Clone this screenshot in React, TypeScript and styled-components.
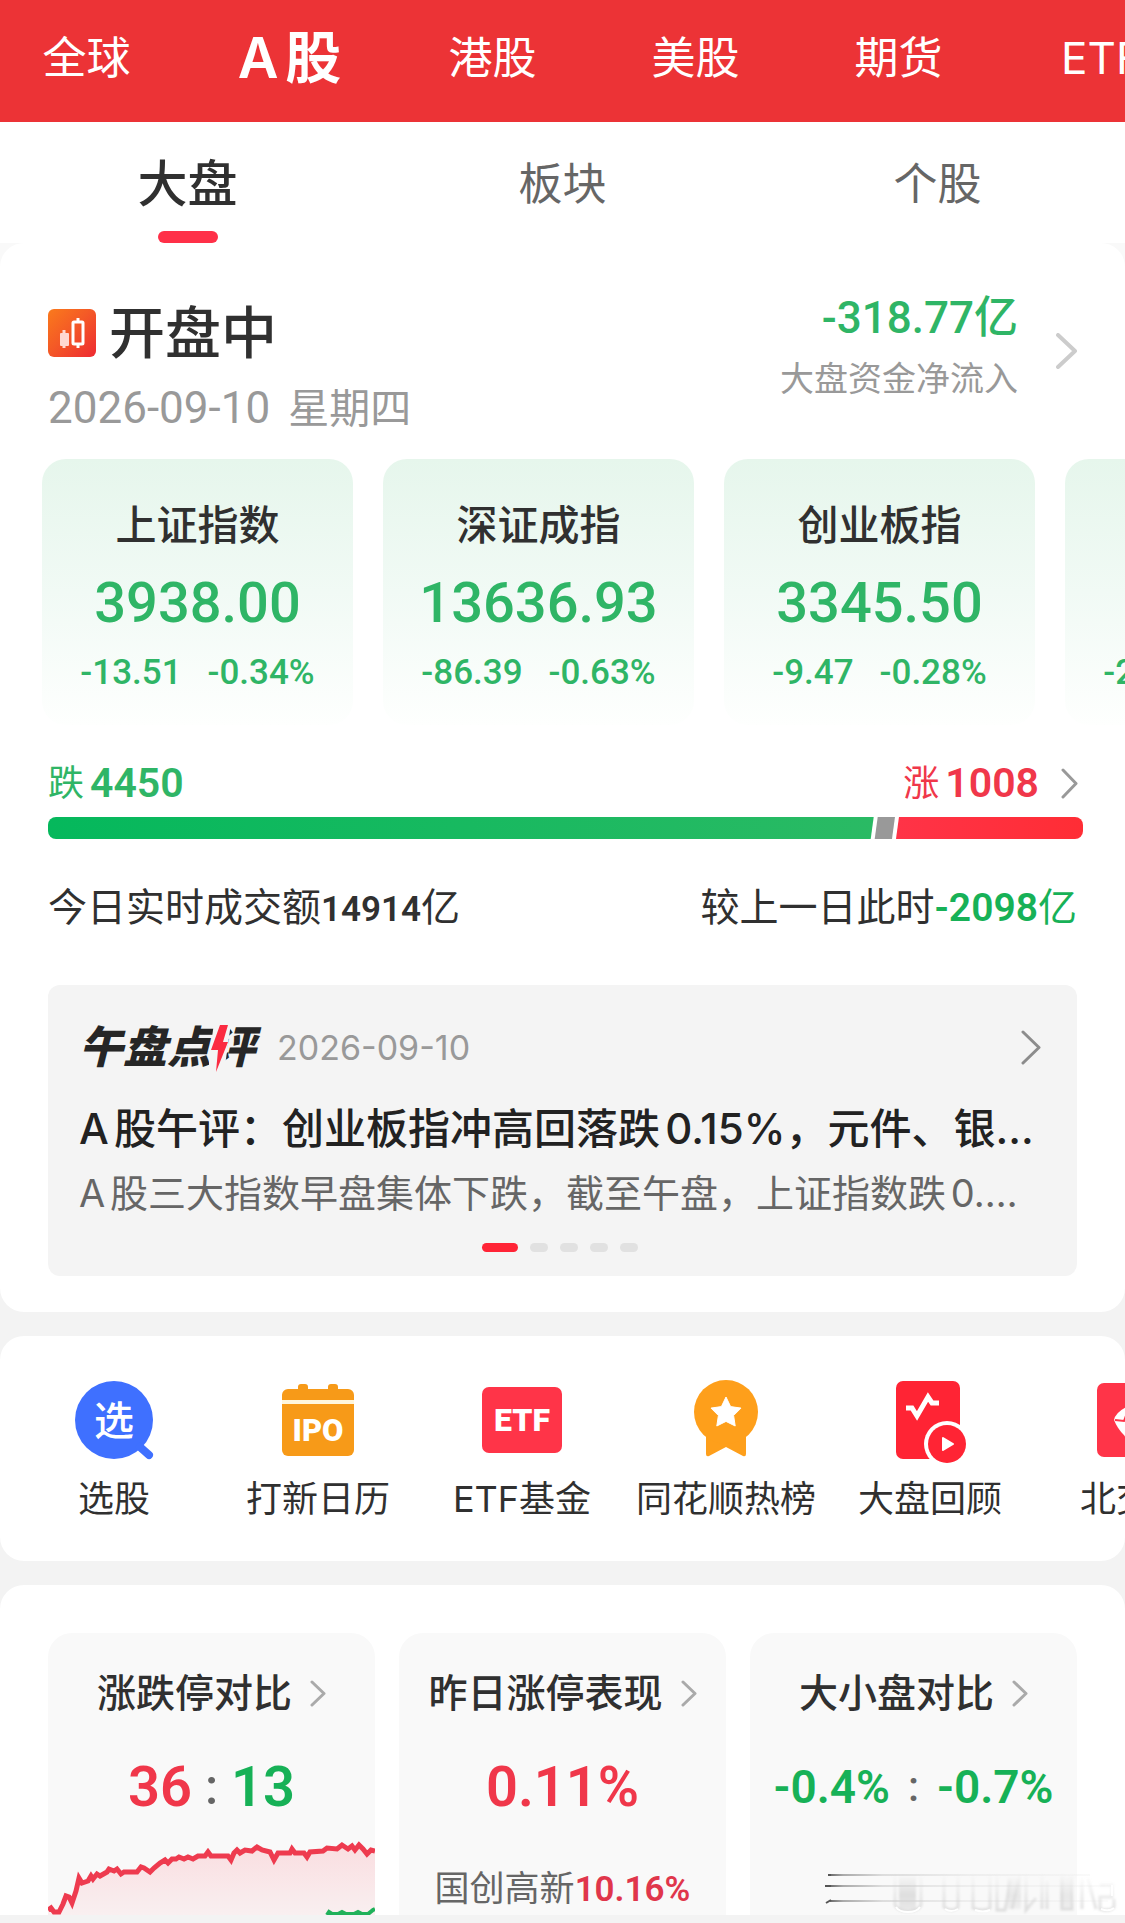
import React from "react";
import styled, { createGlobalStyle } from "styled-components";

const GlobalStyle = createGlobalStyle`
  *, *::before, *::after { box-sizing: border-box; }
  html { background: #f3f3f3; }
  body {
    margin: 0;
    overflow-x: hidden;
    color: #303030;
    font-family: Inter, "Noto Sans CJK SC", sans-serif;
  }
  button { border: 0; padding: 0; background: none; color: inherit; font: inherit; cursor: pointer; }
  a { color: inherit; text-decoration: none; }
  h1, h2, h3, p, ul { margin: 0; padding: 0; font-weight: inherit; }
  ul { list-style: none; }
  svg { display: block; flex: none; }
`;

const RED = "#f0374a";
const GREEN = "#2fb566";
const DEEP_GREEN = "#17b157";

const Page = styled.div`
  position: relative;
  width: 100%;
  min-height: 100vh;
  padding-bottom: 9px;
  overflow: hidden;
`;

const MarketNav = styled.nav`
  display: flex;
  align-items: center;
  height: 122px;
  padding-bottom: 7px;
  overflow: hidden;
  background: #ec3336;
`;

const MarketList = styled.ul`
  display: flex;
  margin-left: -15px;
`;

const MarketItem = styled.li`
  flex: none;
  width: 203px;
  text-align: center;
`;

const MarketLink = styled.a<{ $active?: boolean }>`
  color: #fff;
  font-size: ${(p) => (p.$active ? 56 : 44)}px;
  font-weight: ${(p) => (p.$active ? 600 : 400)};
  line-height: 64px;
  white-space: nowrap;
  text-autospace: normal;
`;

const SubTabs = styled.nav`
  display: grid;
  grid-template-columns: repeat(3, 1fr);
  background: #fff;
`;

const SubTab = styled.button<{ $active?: boolean }>`
  display: flex;
  flex-direction: column;
  align-items: center;
  height: 121px;
  padding-top: 30px;
  color: ${(p) => (p.$active ? "#303030" : "#666")};
  font-size: ${(p) => (p.$active ? 50 : 44)}px;
  font-weight: ${(p) => (p.$active ? 500 : 400)};
  line-height: 64px;
`;

const Indicator = styled.span`
  width: 60px;
  height: 12px;
  margin-top: 15px;
  border-radius: 6px;
  background: #ff3048;
`;

const Overview = styled.div`
  background: linear-gradient(#f9f9f9 50%, #f3f3f3 50%);
`;

const Panel = styled.section<{ $cut?: boolean }>`
  margin-bottom: ${(p) => (p.$cut ? 0 : 24)}px;
  border-radius: ${(p) => (p.$cut ? "24px 24px 0 0" : "24px")};
  background: #fff;
  overflow: hidden;
`;

const StatusRow = styled.header`
  display: flex;
  justify-content: space-between;
  padding: 50px 48px 0;
`;

const StatusLeft = styled.div`
  padding-top: 8px;
`;

const StatusTitle = styled.h1`
  display: flex;
  align-items: center;
  gap: 13px;
  font-size: 56px;
  font-weight: 500;
  line-height: 64px;
`;

const StatusDate = styled.p`
  display: flex;
  align-items: center;
  gap: 18px;
  margin-top: 19px;
  color: #999;
  font-size: 41px;
  line-height: 48px;
`;

const Num = styled.span<{ $size: number; $weight?: number; $color?: string }>`
  color: ${(p) => p.$color ?? "inherit"};
  font-family: Roboto, "Noto Sans CJK SC", sans-serif;
  font-size: ${(p) => p.$size}px;
  font-weight: ${(p) => p.$weight ?? 500};
  white-space: nowrap;
`;

const FlowLink = styled.a`
  display: flex;
  align-items: center;
  gap: 38px;
  height: 116px;
`;

const FlowText = styled.span`
  display: flex;
  flex-direction: column;
  align-items: flex-end;
  gap: 13px;
  padding-bottom: 6px;
  color: #999;
  font-size: 34px;
  line-height: 48px;
`;

const IndexStrip = styled.div`
  display: flex;
  gap: 30px;
  margin-top: 27px;
  padding-left: 42px;
  overflow: hidden;
`;

const IndexCard = styled.a`
  display: flex;
  flex: none;
  flex-direction: column;
  align-items: center;
  width: 311px;
  padding: 42px 0 34px;
  border-radius: 24px;
  background: linear-gradient(#e6f6ec, #f1faf5 50%, #fefffe);
  color: ${GREEN};
`;

const IndexName = styled.h2`
  color: #303030;
  font-size: 41px;
  font-weight: 500;
  line-height: 48px;
`;

const IndexValue = styled.span`
  margin-top: 22px;
  font-family: Roboto, sans-serif;
  font-size: 56px;
  font-weight: 500;
  line-height: 64px;
`;

const IndexChange = styled.span`
  display: flex;
  gap: 26px;
  margin-top: 20px;
  font-family: Roboto, sans-serif;
  font-size: 35px;
  font-weight: 500;
  line-height: 36px;
`;

const Breadth = styled.a`
  display: block;
  padding: 36px 42px 0 48px;
`;

const BreadthRow = styled.span`
  display: flex;
  justify-content: space-between;
  line-height: 44px;
`;

const BreadthSide = styled.span<{ $color: string }>`
  display: flex;
  align-items: center;
  gap: 6px;
  color: ${(p) => p.$color};
  font-size: 36px;
`;

const ChevronSlot = styled.span`
  padding: 0 5px 0 16px;
`;

const Bar = styled.span`
  display: flex;
  height: 22px;
  margin-top: 12px;
  border-radius: 8px;
  overflow: hidden;
`;

const Fall = styled.span`
  background: linear-gradient(90deg, #05b85c, #2aba64);
  clip-path: polygon(0 0, 100% 0, calc(100% - 3px) 100%, 0 100%);
`;

const Flat = styled.span`
  background: #999;
  clip-path: polygon(4px 0, calc(100% - 1px) 0, calc(100% - 4px) 100%, 1px 100%);
`;

const Rise = styled.span`
  background: linear-gradient(90deg, #ff3347, #ff2d35);
  clip-path: polygon(3px 0, 100% 0, 100% 100%, 0 100%);
`;

const Turnover = styled.div`
  display: flex;
  justify-content: space-between;
  margin-top: 46px;
  padding: 0 48px;
  font-size: 39px;
  line-height: 44px;
`;

const News = styled.article`
  margin: 53px 48px 36px;
  padding: 36px 36px 24px 31px;
  border-radius: 12px;
  background: #f4f4f4;
`;

const NewsHead = styled.header`
  display: flex;
  align-items: center;
  height: 52px;
`;

const NewsBrand = styled.h2`
  position: relative;
  color: #262626;
  font-size: 44px;
  font-style: italic;
  font-weight: 900;
  line-height: 52px;
`;

const BoltOverlay = styled.svg`
  position: absolute;
  top: 2px;
  right: 24px;
`;

const NewsDate = styled.time`
  flex: 1;
  margin-left: 22px;
  color: #999;
  font-size: 34px;
`;

const NewsTitle = styled.h3`
  margin-top: 30px;
  overflow: hidden;
  color: #222;
  font-size: 42px;
  font-weight: 500;
  line-height: 52px;
  text-autospace: normal;
  white-space: nowrap;
`;

const NewsText = styled.p`
  margin-top: 14px;
  overflow: hidden;
  color: #666;
  font-size: 38px;
  line-height: 48px;
  text-autospace: normal;
  white-space: nowrap;
`;

const Dots = styled.div`
  display: flex;
  justify-content: center;
  gap: 12px;
  margin-top: 26px;
`;

const Dot = styled.span<{ $active?: boolean }>`
  width: ${(p) => (p.$active ? 36 : 18)}px;
  height: 9px;
  border-radius: 5px;
  background: ${(p) => (p.$active ? "#ff2436" : "#e1e1e1")};
`;

const Shortcuts = styled.ul`
  display: flex;
  padding: 43px 0 40px 12px;
`;

const Shortcut = styled.li`
  flex: none;
  width: 204px;
`;

const ShortcutLink = styled.a`
  display: flex;
  flex-direction: column;
  align-items: center;
  gap: 14px;
  font-size: 36px;
  line-height: 44px;
  white-space: nowrap;
`;

const StatGrid = styled.div`
  display: grid;
  grid-template-columns: repeat(3, 1fr);
  gap: 24px;
  padding: 48px 48px 0;
`;

const StatCard = styled.article`
  display: flex;
  flex-direction: column;
  align-items: center;
  height: 282px;
  padding-top: 36px;
  border-radius: 24px 24px 0 0;
  overflow: hidden;
  background: #f9f9f9;
`;

const StatTitle = styled.a`
  display: flex;
  align-items: center;
  gap: 18px;
  font-size: 39px;
  font-weight: 500;
  line-height: 48px;
  white-space: nowrap;
`;

const StatValue = styled.div<{ $gap?: number }>`
  display: flex;
  align-items: center;
  gap: ${(p) => p.$gap ?? 18}px;
  margin-top: 38px;
  line-height: 64px;
`;

const Leader = styled.p`
  margin-top: 47px;
  color: #666;
  font-size: 35px;
  line-height: 44px;
  white-space: nowrap;
`;

const Trend = styled.svg`
  width: 100%;
  margin-top: 22px;
`;

const Watermark = styled.svg`
  position: absolute;
  right: 0;
  bottom: 0;
  pointer-events: none;
`;

function Chevron({ w, h, color, stroke }: { w: number; h: number; color: string; stroke: number }) {
  return (
    <svg width={w} height={h} viewBox={`0 0 ${w} ${h}`} fill="none" aria-hidden="true">
      <path d={`M2 2L${w - 2} ${h / 2}L2 ${h - 2}`} stroke={color} strokeWidth={stroke} strokeLinecap="round" strokeLinejoin="round" />
    </svg>
  );
}

function MarketIcon() {
  return (
    <svg width="48" height="48" viewBox="0 0 48 48" aria-hidden="true">
      <defs>
        <linearGradient id="market" x1="0" y1="0" x2="1" y2="1">
          <stop offset="0" stopColor="#fa7a1c" />
          <stop offset="0.45" stopColor="#f45a26" />
          <stop offset="1" stopColor="#ee2a32" />
        </linearGradient>
      </defs>
      <rect width="48" height="48" rx="6" fill="url(#market)" />
      <path d="M16 21v3M16 36v3" stroke="#ffd9d2" strokeWidth="3" />
      <rect x="12" y="24" width="9" height="13" rx="1" fill="#ffd9d2" />
      <path d="M30 9v4M30 35v4" stroke="#fff" strokeWidth="3" />
      <rect x="25" y="13" width="10" height="22" rx="1" fill="none" stroke="#fff" strokeWidth="3" />
    </svg>
  );
}

const iconProps = { width: 84, height: 84, viewBox: "0 0 84 84", "aria-hidden": true } as const;

function PickIcon() {
  return (
    <svg {...iconProps}>
      <circle cx="42" cy="41" r="39" fill="#3f70ff" />
      <path d="M68 68l9 8" stroke="#3f70ff" strokeWidth="8" strokeLinecap="round" />
      <text x="42" y="56" textAnchor="middle" fill="#fff" fontFamily="Noto Sans CJK SC" fontSize="40" fontWeight="500">选</text>
    </svg>
  );
}

function IpoIcon() {
  return (
    <svg {...iconProps}>
      <path d="M6 21v-5a6 6 0 0 1 6-6h10V8a3 3 0 0 1 3-3h4a3 3 0 0 1 3 3v2h20V8a3 3 0 0 1 3-3h4a3 3 0 0 1 3 3v2h10a6 6 0 0 1 6 6v5z" fill="#f79a18" />
      <path d="M6 21h72v4H6z" fill="#fff6dc" />
      <path d="M6 25h72v46a6 6 0 0 1-6 6H12a6 6 0 0 1-6-6z" fill="#f79a18" />
      <text x="42" y="62" textAnchor="middle" fill="#fff" fontFamily="Roboto" fontSize="31" fontWeight="900">IPO</text>
    </svg>
  );
}

function EtfIcon() {
  return (
    <svg {...iconProps}>
      <rect x="2" y="8" width="80" height="66" rx="7" fill="#ff3448" />
      <text x="42" y="52" textAnchor="middle" fill="#fff" fontFamily="Roboto" fontSize="32" fontWeight="900">ETF</text>
    </svg>
  );
}

function MedalIcon() {
  return (
    <svg {...iconProps}>
      <path d="M22 52h40v23q0 3-3 2L42 68L25 77q-3 1-3-2z" fill="#fe9f1b" />
      <circle cx="42" cy="33" r="32" fill="#fe9f1b" />
      <path d="M42 18l4.6 9.6 10.4 1.5-7.4 7.4 1.6 10.5L42 42.4 32.800 47l1.600-10.500L27 29.100l10.400-1.500z" fill="#fff" stroke="#fff" strokeWidth="1" strokeLinejoin="round" />
    </svg>
  );
}

function ReviewIcon() {
  return (
    <svg {...iconProps}>
      <rect x="8" y="2" width="64" height="78" rx="7" fill="#ff2434" />
      <path d="M18 29h6l5 8L40 18l4 6h7" fill="none" stroke="#fff" strokeWidth="5" />
      <circle cx="59" cy="65" r="23" fill="#fff" />
      <circle cx="59" cy="65" r="19" fill="#ff2434" />
      <path d="M55 59l10 6-10 6z" fill="#fff" stroke="#fff" strokeWidth="2" strokeLinejoin="round" />
    </svg>
  );
}

function ExchangeIcon() {
  return (
    <svg {...iconProps}>
      <rect x="5" y="4" width="74" height="74" rx="7" fill="#ff3448" />
      <path d="M22 41Q24 31 42 25Q60 31 62 41Q58 53 42 65Q27 54 22 41z" fill="#fff" />
      <path d="M23 41l9 1 3-8" fill="none" stroke="#ff3448" strokeWidth="2" />
    </svg>
  );
}

const markets = ["全球", "A股", "港股", "美股", "期货", "ETF"];
const subTabs = ["大盘", "板块", "个股"];
const indices = [
  { name: "上证指数", value: "3938.00", diff: "-13.51", pct: "-0.34%" },
  { name: "深证成指", value: "13636.93", diff: "-86.39", pct: "-0.63%" },
  { name: "创业板指", value: "3345.50", diff: "-9.47", pct: "-0.28%" },
  { name: "科创50", value: "983.20", diff: "-21.06", pct: "-1.31%" },
];
const breadth = { fall: 4450, flat: 120, rise: 1008 };
const shortcuts = [
  { label: "选股", Icon: PickIcon },
  { label: "打新日历", Icon: IpoIcon },
  { label: "ETF基金", Icon: EtfIcon },
  { label: "同花顺热榜", Icon: MedalIcon },
  { label: "大盘回顾", Icon: ReviewIcon },
  { label: "北交所", Icon: ExchangeIcon },
];

const riseLine =
  "0,69 3,67 6,71 11,71 15,63 18,55 21,56 24,62 28,50 31,37 34,42 40,40 43,35 45,38 49,33 52,35 59,31 61,28 66,30 69,28 73,33 76,31 89,31 93,26 96,27 102,31 106,27 112,22 117,19 120,22 124,18 128,18 131,16 136,18 140,16 145,18 150,15 157,15 160,11 163,15 180,15 183,19 186,12 189,9 192,12 197,9 204,10 209,6 214,9 222,11 226,19 230,12 242,12 244,8 247,12 256,12 259,16 262,11 275,10 279,7 289,8 294,4 300,8 304,5 307,9 311,4 315,8 319,13 323,9 327,10";

export default function App() {
  return (
    <Page>
      <GlobalStyle />
      <MarketNav aria-label="市场">
        <MarketList>
          {markets.map((m) => (
            <MarketItem key={m}>
              <MarketLink href="#" $active={m === "A股"}>{m}</MarketLink>
            </MarketItem>
          ))}
        </MarketList>
      </MarketNav>
      <SubTabs>
        {subTabs.map((t, i) => (
          <SubTab key={t} type="button" $active={i === 0}>
            {t}
            {i === 0 && <Indicator />}
          </SubTab>
        ))}
      </SubTabs>

      <Overview>
        <Panel>
          <StatusRow>
            <StatusLeft>
              <StatusTitle><MarketIcon />开盘中</StatusTitle>
              <StatusDate>
                <Num $size={44} $weight={400}>2026-09-10</Num>
                <span>星期四</span>
              </StatusDate>
            </StatusLeft>
            <FlowLink href="#">
              <FlowText>
                <Num $size={44} $color={GREEN}>-318.77亿</Num>
                <span>大盘资金净流入</span>
              </FlowText>
              <Chevron w={21} h={36} color="#ccc" stroke={4} />
            </FlowLink>
          </StatusRow>

          <IndexStrip>
            {indices.map((x) => (
              <IndexCard key={x.name} href="#">
                <IndexName>{x.name}</IndexName>
                <IndexValue>{x.value}</IndexValue>
                <IndexChange><span>{x.diff}</span><span>{x.pct}</span></IndexChange>
              </IndexCard>
            ))}
          </IndexStrip>

          <Breadth href="#">
            <BreadthRow>
              <BreadthSide $color={GREEN}>
                跌<Num $size={41} $weight={600}>{breadth.fall}</Num>
              </BreadthSide>
              <BreadthSide $color={RED}>
                涨<Num $size={41} $weight={600}>{breadth.rise}</Num>
                <ChevronSlot><Chevron w={17} h={31} color="#999" stroke={3} /></ChevronSlot>
              </BreadthSide>
            </BreadthRow>
            <Bar>
              <Fall style={{ flexGrow: breadth.fall }} />
              <Flat style={{ flexGrow: breadth.flat }} />
              <Rise style={{ flexGrow: breadth.rise }} />
            </Bar>
          </Breadth>

          <Turnover>
            <span>今日实时成交额<Num $size={35} $weight={600}>14914</Num>亿</span>
            <span>
              较上一日此时<Num $size={39} $weight={600} $color={DEEP_GREEN}>-2098</Num>
              <Num $size={39} $weight={400} $color={DEEP_GREEN}>亿</Num>
            </span>
          </Turnover>

          <News>
            <NewsHead>
              <NewsBrand>
                午盘点评
                <BoltOverlay width="22" height="50" viewBox="0 0 22 50" aria-hidden="true">
                  <path d="M5 0h17l-7 50H-2z" fill="#f4f4f4" />
                  <path d="M11 2h8l-5 17h5L7 49l2-22H2z" fill="#fb2b41" />
                </BoltOverlay>
              </NewsBrand>
              <NewsDate>2026-09-10</NewsDate>
              <Chevron w={20} h={35} color="#8c8c8c" stroke={3} />
            </NewsHead>
            <NewsTitle>A股午评：创业板指冲高回落跌0.15%，元件、银…</NewsTitle>
            <NewsText>A股三大指数早盘集体下跌，截至午盘，上证指数跌0.…</NewsText>
            <Dots>
              {[0, 1, 2, 3, 4].map((i) => <Dot key={i} $active={i === 0} />)}
            </Dots>
          </News>
        </Panel>
      </Overview>

      <Panel>
        <Shortcuts>
          {shortcuts.map(({ label, Icon }) => (
            <Shortcut key={label}>
              <ShortcutLink href="#"><Icon />{label}</ShortcutLink>
            </Shortcut>
          ))}
        </Shortcuts>
      </Panel>

      <Panel $cut>
        <StatGrid>
          <StatCard>
            <StatTitle href="#">涨跌停对比<Chevron w={16} h={27} color="#aaa" stroke={3} /></StatTitle>
            <StatValue $gap={13}>
              <Num $size={56} $weight={600} $color={RED}>36</Num>
              <Num $size={50} $color="#666">:</Num>
              <Num $size={56} $weight={600} $color={DEEP_GREEN}>13</Num>
            </StatValue>
            <Trend viewBox="0 0 327 74" height="74" preserveAspectRatio="none" aria-hidden="true">
              <defs>
                <linearGradient id="rise" x1="0" y1="0" x2="0" y2="1">
                  <stop offset="0" stopColor="#ff3448" stopOpacity="0.14" />
                  <stop offset="1" stopColor="#ff3448" stopOpacity="0.05" />
                </linearGradient>
              </defs>
              <polygon points={`${riseLine} 327,74 0,74`} fill="url(#rise)" />
              <polyline points={riseLine} fill="none" stroke="#ee3b4f" strokeWidth="5" />
              <polyline points="279,74 281,71 284,73 290,73 294,71 298,73 306,73 310,71 314,73 320,73 325,69 327,68" fill="none" stroke="#1fb15a" strokeWidth="4" />
            </Trend>
          </StatCard>
          <StatCard>
            <StatTitle href="#">昨日涨停表现<Chevron w={16} h={27} color="#aaa" stroke={3} /></StatTitle>
            <StatValue>
              <Num $size={56} $weight={600} $color={RED}>0.11%</Num>
            </StatValue>
            <Leader>国创高新<Num $size={35} $weight={600} $color="#e0364b">10.16%</Num></Leader>
          </StatCard>
          <StatCard>
            <StatTitle href="#">大小盘对比<Chevron w={16} h={27} color="#aaa" stroke={3} /></StatTitle>
            <StatValue>
              <Num $size={46} $weight={600} $color={DEEP_GREEN}>-0.4%</Num>
              <Num $size={42} $color="#666">:</Num>
              <Num $size={46} $weight={600} $color={DEEP_GREEN}>-0.7%</Num>
            </StatValue>
          </StatCard>
        </StatGrid>
      </Panel>

      <Watermark width="315" height="63" viewBox="0 0 315 63" aria-hidden="true">
        <defs>
          <linearGradient id="streak" gradientUnits="userSpaceOnUse" x1="16" y1="0" x2="300" y2="0">
            <stop offset="0" stopColor="#555" />
            <stop offset="0.06" stopColor="#aaa" />
            <stop offset="0.2" stopColor="#ddd" />
            <stop offset="0.5" stopColor="#eee" />
            <stop offset="1" stopColor="#eee" stopOpacity="0.2" />
          </linearGradient>
          <linearGradient id="smear" x1="0" y1="0" x2="0" y2="1">
            <stop offset="0" stopColor="#ccc" stopOpacity="0" />
            <stop offset="0.6" stopColor="#ccc" stopOpacity="0.6" />
            <stop offset="1" stopColor="#ddd" stopOpacity="0.6" />
          </linearGradient>
          <linearGradient id="edge" gradientUnits="userSpaceOnUse" x1="0" y1="12" x2="0" y2="50">
            <stop offset="0" stopColor="#ccc" stopOpacity="0" />
            <stop offset="1" stopColor="#ccc" stopOpacity="0.6" />
          </linearGradient>
          <filter id="soft"><feGaussianBlur stdDeviation="1.2" /></filter>
        </defs>
        <path d="M18 13h262v2H18zM15 24h287v2H15zM20 39h278v2H20z" fill="url(#streak)" />
        <path d="M16 42l5-3M18 14h3M16 25h5" stroke="#555" strokeWidth="2" />
        <g filter="url(#soft)">
          <rect x="89" y="13" width="17" height="35" fill="url(#smear)" />
          <path d="M85 14v30q3 6 13 6t13-6V14M134 14v32q8 6 14 0V14M163 14v33q10 4 17 0V14M187 14v35h8l5-30M210 14l-8 34M216 14v35l10-12M232 14v34M237 20v28M252 14v34h10V14M272 18v30M278 18l8 30M290 24h12v12h-12v12q10 3 14-2V38" fill="none" stroke="url(#edge)" strokeWidth="3" />
          <path d="M197 14h14v34h-14zM250 14h12v34h-12z" fill="url(#smear)" opacity="0.6" />
        </g>
        <path d="M86 46q3 5 12 5t12-5M135 48q6 4 13 0M165 49q8 3 15 0M291 48q8 3 13-1M302 24v11" fill="none" stroke="#fff" strokeWidth="2" />
      </Watermark>
    </Page>
  );
}
